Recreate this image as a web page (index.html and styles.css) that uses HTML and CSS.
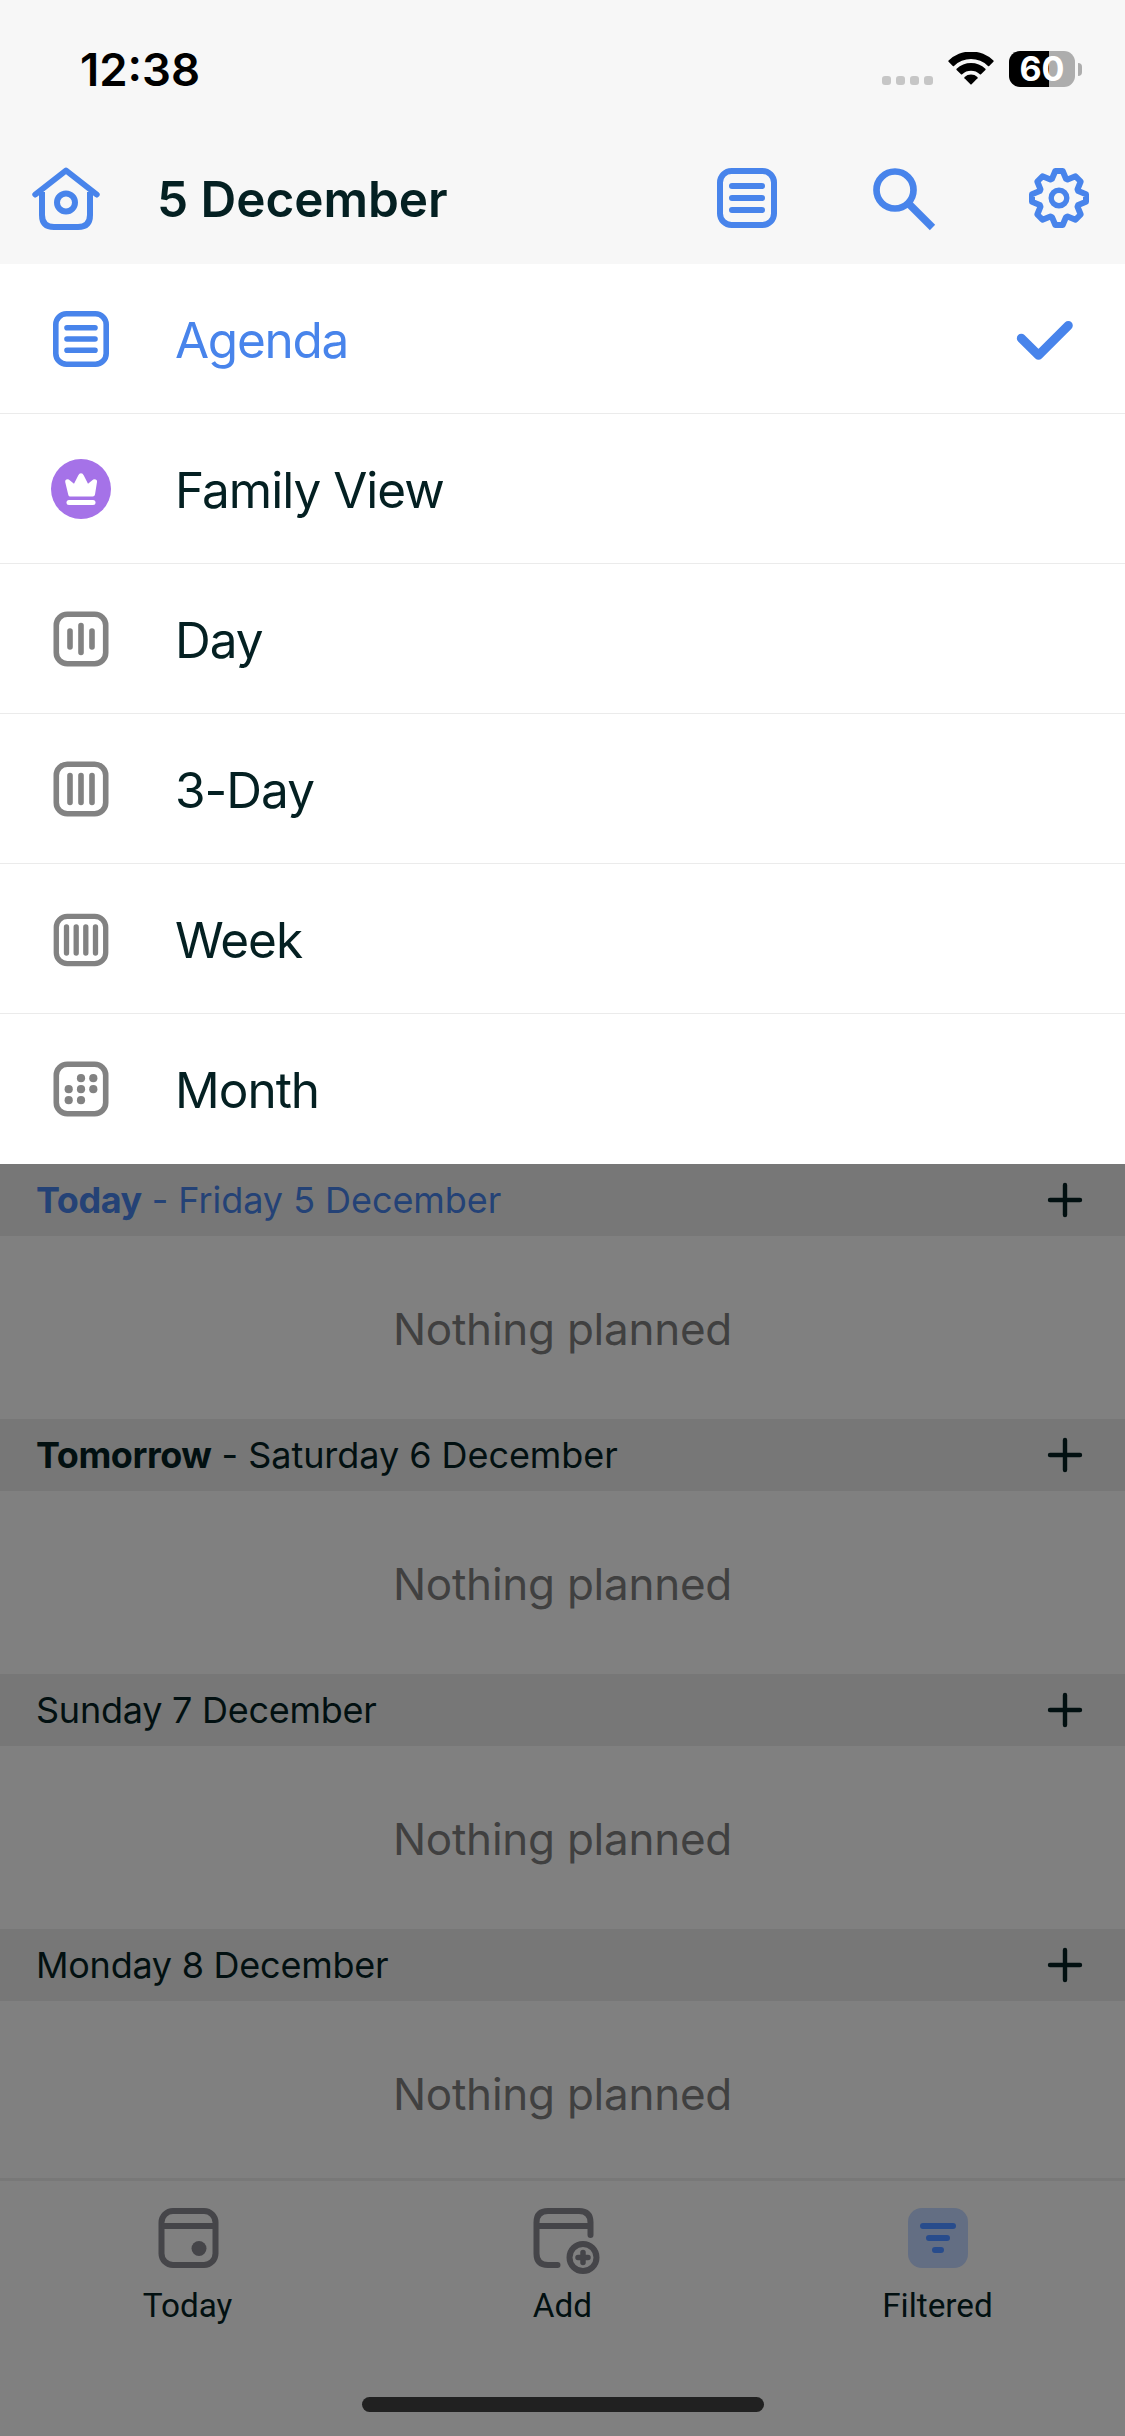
FILE: index.html
```html
<!DOCTYPE html>
<html lang="en">
<head>
<meta charset="utf-8">
<title>5 December</title>
<link rel="stylesheet" href="styles.css">
</head>
<body>
<svg width="0" height="0" class="defs">
  <symbol id="plus" viewBox="0 0 36 36"><path d="M18 3v30M3 18h30" fill="none" stroke="currentColor" stroke-width="4.4" stroke-linecap="round"/></symbol>
  <symbol id="list" viewBox="0 0 60 60"><rect x="3" y="3" width="54" height="54" rx="11.5" fill="none" stroke="currentColor" stroke-width="6"/><path d="M15 18h30M15 30h30M15 42h30" fill="none" stroke="currentColor" stroke-width="6" stroke-linecap="round"/></symbol>
</svg>
<div class="screen">
  <header class="top">
    <div class="status">
      <span class="time">12:38</span>
      <svg class="dots" width="52" height="10" viewBox="0 0 52 10" fill="#c6c6c6"><rect width="9" height="9" rx="3"/><rect x="14" width="9" height="9" rx="3"/><rect x="28" width="9" height="9" rx="3"/><rect x="42" width="9" height="9" rx="3"/></svg>
      <svg class="wifi" width="46" height="34" viewBox="0 0 46 34"><path d="M.6 9.800Q0 9.200.6 8.600A32 32 0 0 1 45.400 8.600Q46 9.200 45.400 9.800L41.200 13.900Q40.600 14.500 40 13.900A24.500 24.500 0 0 0 6 13.900Q5.400 14.500 4.800 13.900Z"/><path d="M8.600 18Q8 17.400 8.600 16.800A21 21 0 0 1 37.400 16.800Q38 17.400 37.400 18L33 22.300Q32.400 22.800 31.800 22.300A13 13 0 0 0 14.200 22.300Q13.600 22.800 13 22.300Z"/><path d="M16.500 26.200Q16 25.600 16.600 25A9.500 9.500 0 0 1 29.400 25Q30 25.600 29.500 26.200L23.600 32.300Q23 32.900 22.400 32.300Z"/></svg>
      <div class="battery"><div class="cell">60</div><i class="cap"></i></div>
    </div>
    <nav class="bar">
      <svg class="home" width="70" height="68" viewBox="0 0 70 68" fill="none" stroke="#4884eb" stroke-width="6" stroke-linecap="round" stroke-linejoin="round"><path d="M4.300 29.500L35 5.500L65.700 29.500"/><path d="M11 27V50Q11 62 23 62H47Q59 62 59 50V27" stroke-linecap="butt"/><circle cx="35" cy="37.500" r="9"/></svg>
      <h1 class="title">5 December</h1>
      <svg class="act" width="60" height="60"><use href="#list"/></svg>
      <svg class="search" width="64" height="64" viewBox="0 0 64 64" fill="none" stroke="#4884eb"><circle cx="22" cy="22" r="18.500" stroke-width="6.700"/><path d="M36 36L59.500 59.500" stroke-width="7.500"/></svg>
      <svg class="gear" width="60" height="60" viewBox="0 0 60 60" fill="none" stroke="#4884eb" stroke-linejoin="round"><path d="M26.300 3H33.700L37 10.800L38.600 11.500L46.500 8.300L51.700 13.500L48.500 21.400L49.200 23L57 26.300V33.700L49.200 37L48.500 38.600L51.700 46.500L46.500 51.700L38.600 48.500L37 49.200L33.700 57H26.300L23 49.200L21.400 48.500L13.500 51.700L8.300 46.500L11.500 38.600L10.800 37L3 33.700V26.300L10.800 23L11.500 21.400L8.300 13.500L13.500 8.300L21.400 11.500L23 10.800Z" stroke-width="6"/><circle cx="30" cy="30" r="7.800" stroke-width="5.400"/></svg>
    </nav>
  </header>

  <ul class="menu">
    <li class="row on"><span class="ico"><svg width="56" height="56"><use href="#list"/></svg></span><span class="label">Agenda</span>
      <svg class="check" width="58" height="42" viewBox="0 0 58 42" fill="none" stroke="currentColor" stroke-width="9" stroke-linecap="round" stroke-linejoin="round"><path d="M5.300 18.200L22.500 35.300L52.300 5.500"/></svg></li>
    <li class="row"><span class="ico"><svg width="60" height="60" viewBox="0 0 60 60"><circle cx="30" cy="30" r="30" fill="#a572e8"/><path d="M17.200 35.500L14.200 23Q14 20.200 16.500 20.200Q17.800 20.200 19 21.500L23 24.800L27.200 16.500Q28.200 14.300 30 14.300Q31.800 14.300 32.800 16.500L37 24.800L41 21.500Q42.200 20.200 43.500 20.200Q46.300 20.200 46 23L44 35.500Q43.700 37.500 41.700 37.500H18.800Q17.500 37.500 17.200 35.500Z" fill="#fff"/><rect x="15.500" y="41" width="29" height="5" rx="2.500" fill="#fff"/></svg></span><span class="label">Family View</span></li>
    <li class="row"><span class="ico"><svg width="56" height="56" viewBox="0 0 56 56" fill="none" stroke="currentColor" stroke-width="5.600" stroke-linecap="round"><rect x="3.300" y="3.300" width="49.400" height="49.400" rx="11"/><path d="M17 20v16M28 14.500v27M39 20v16"/></svg></span><span class="label">Day</span></li>
    <li class="row"><span class="ico"><svg width="56" height="56" viewBox="0 0 56 56" fill="none" stroke="currentColor" stroke-width="5.600" stroke-linecap="round"><rect x="3.300" y="3.300" width="49.400" height="49.400" rx="11"/><path d="M17 14.500v27M28 14.500v27M39 14.500v27"/></svg></span><span class="label">3-Day</span></li>
    <li class="row"><span class="ico low"><svg width="56" height="54" viewBox="0 0 56 54" fill="none" stroke="currentColor" stroke-width="5.300" stroke-linecap="round"><rect x="3.300" y="3.300" width="49.400" height="47.400" rx="11"/><path d="M13.500 14v26M23.200 14v26M32.800 14v26M42.500 14v26"/></svg></span><span class="label">Week</span></li>
    <li class="row"><span class="ico"><svg width="56" height="56" viewBox="0 0 56 56" fill="currentColor"><rect x="3.300" y="3.300" width="49.400" height="49.400" rx="11" fill="none" stroke="currentColor" stroke-width="5.600"/><circle cx="28" cy="17.200" r="4.100"/><circle cx="40.300" cy="17.200" r="4.100"/><circle cx="15.700" cy="28.200" r="4.100"/><circle cx="28" cy="28.200" r="4.100"/><circle cx="40.300" cy="28.200" r="4.100"/><circle cx="15.700" cy="39.200" r="4.100"/><circle cx="28" cy="39.200" r="4.100"/></svg></span><span class="label">Month</span></li>
  </ul>

  <main class="days">
    <section class="day"><h2 class="head near today"><span><b>Today</b> - Friday 5 December</span><svg width="36" height="36"><use href="#plus"/></svg></h2><p class="none">Nothing planned</p></section>
    <section class="day"><h2 class="head near"><span><b>Tomorrow</b> - Saturday 6 December</span><svg width="36" height="36"><use href="#plus"/></svg></h2><p class="none">Nothing planned</p></section>
    <section class="day"><h2 class="head"><span>Sunday 7 December</span><svg width="36" height="36"><use href="#plus"/></svg></h2><p class="none">Nothing planned</p></section>
    <section class="day"><h2 class="head"><span>Monday 8 December</span><svg width="36" height="36"><use href="#plus"/></svg></h2><p class="none">Nothing planned</p></section>
  </main>

  <footer class="tabs">
    <div class="tab"><svg width="68" height="68" viewBox="0 0 68 68" fill="none" stroke="#454549" stroke-width="6"><rect x="7.500" y="3" width="54" height="54" rx="11.500"/><path d="M7.500 18h54"/><circle cx="45" cy="40.500" r="7.500" fill="#454549" stroke="none"/></svg>Today</div>
    <div class="tab"><svg class="add" width="68" height="68" viewBox="0 0 68 68" fill="none" stroke="#454549" stroke-width="6" stroke-linecap="round"><path d="M61.500 27V14.500Q61.500 3 50 3H19Q7.500 3 7.500 14.500V45.500Q7.500 57 19 57H28.500M7.500 18h54"/><circle cx="54" cy="49.500" r="13.500"/><path d="M54 44.500v10M49 49.500h10" stroke-width="5.500"/></svg>Add</div>
    <div class="tab"><svg width="68" height="68" viewBox="0 0 68 68"><rect x="4" width="60" height="60" rx="14" fill="#636e83"/><path d="M19 18h30M25 30h18M31 42h6" fill="none" stroke="#284c8c" stroke-width="6" stroke-linecap="round"/></svg>Filtered</div>
  </footer>
  <div class="grip"><i class="pill"></i></div>
</div>
</body>
</html>
```
FILE: styles.css
```css
* { box-sizing: border-box; margin: 0; padding: 0; }
body { background: #808080; font-family: Inter, "Liberation Sans", sans-serif; color: #042022; }
svg { display: block; flex: none; }
.defs { display: none; }
.screen { width: 1125px; height: 2436px; display: flex; flex-direction: column; overflow: hidden; }

.top { height: 264px; background: #f7f7f7; }
.status { height: 138px; padding: 0 43px 0 80px; display: flex; align-items: center; }
.time { flex: 1; font-size: 45.500px; font-weight: 600; color: #000; }
.dots { margin: 23px 14px 0 0; }
.wifi { margin-right: 15px; }
.battery { display: flex; align-items: center; gap: 3px; }
.cell { width: 66px; height: 36px; border-radius: 11px; background: linear-gradient(90deg, #000 40px, #adadad 40px); color: #fff; font-size: 34px; line-height: 36px; font-weight: 700; text-align: center; }
.cap { width: 4px; height: 13px; border-radius: 0 4px 4px 0; background: #adadad; }
.bar { height: 126px; padding: 0 36px 0 31px; display: flex; align-items: flex-start; color: #4884eb; }
.home { margin-top: 27px; }
.title { flex: 1; margin: 31px 0 0 56px; font-size: 49.500px; line-height: 60px; font-weight: 600; color: #042022; letter-spacing: -.05px; }
.act { margin: 30px 96px 0 0; }
.search { margin: 30px 92px 0 0; }
.gear { margin-top: 30px; }

.menu { list-style: none; background: #fff; }
.row { height: 150px; padding: 0 51px; border-bottom: 1px solid #ebebeb; display: flex; align-items: center; font-size: 49.500px; letter-spacing: -1px; }
.row:last-child { border-bottom: 0; }
.label { padding-top: 2px; }
.ico { width: 60px; margin-right: 64px; display: flex; justify-content: center; color: #828282; }
.low { padding-top: 2px; }
.on, .on .ico { color: #4884eb; }
.on { letter-spacing: -1.300px; }
.check { margin: 4px 0 0 auto; }

.days { height: 1014px; overflow: hidden; }
.day { height: 255px; }
.head { height: 72px; padding: 0 42px 0 36px; background: #777; display: flex; align-items: center; justify-content: space-between; font-size: 36px; font-weight: 400; letter-spacing: -.25px; color: #021011; }
.near { letter-spacing: -.05px; }
.head b { font-weight: 700; letter-spacing: -.45px; }
.today span { color: #244276; }
.none { line-height: 183px; padding-top: 2px; text-align: center; font-size: 44px; letter-spacing: -.25px; color: #404040; }

.tabs { height: 175px; border-top: 3px solid #787878; padding-top: 27px; display: flex; }
.tab { flex: 1; display: flex; flex-direction: column; align-items: center; gap: 10px; font-family: Roboto, sans-serif; font-size: 33.300px; line-height: 40px; color: #021011; }
.add { overflow: visible; }
.grip { flex: 1; display: flex; justify-content: center; padding-top: 44px; }
.pill { width: 402px; height: 15px; border-radius: 8px; background: #212121; }
```
